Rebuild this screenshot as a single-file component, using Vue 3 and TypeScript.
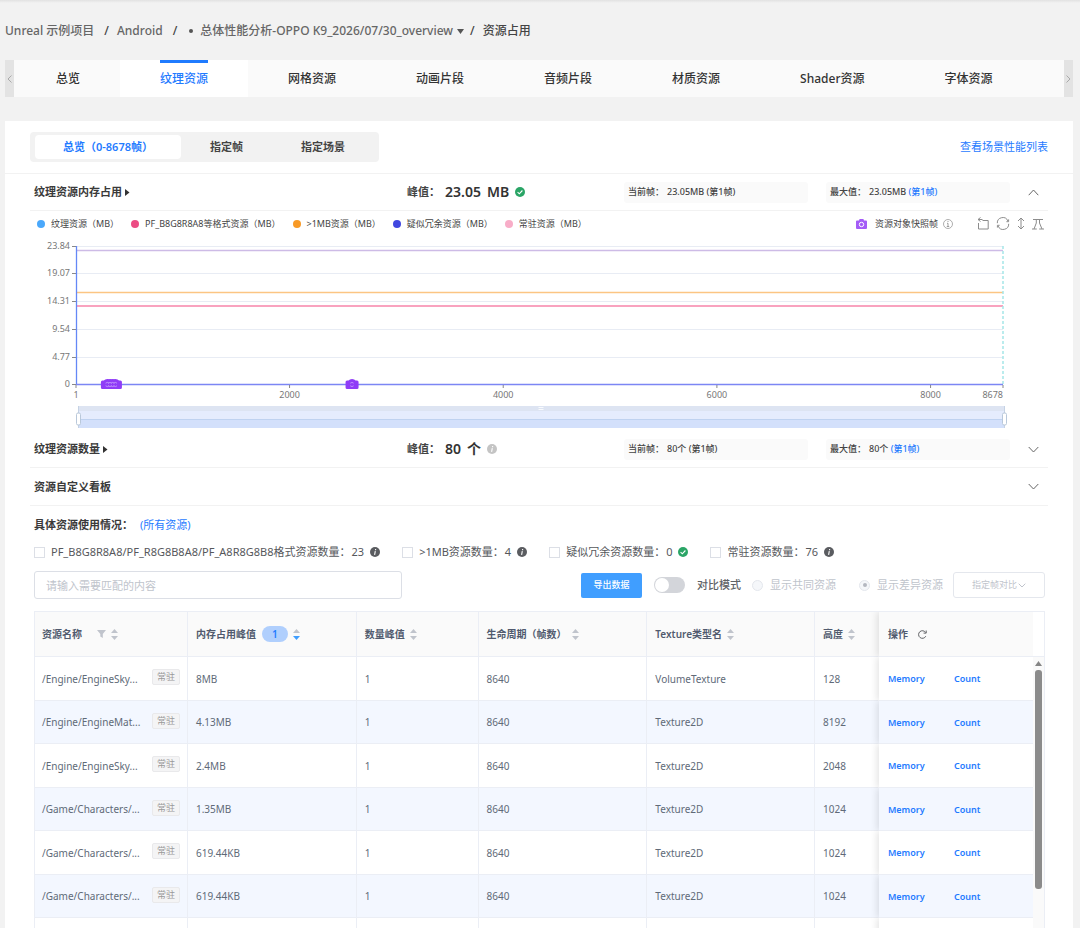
<script setup lang="ts">
import { ref } from 'vue'

interface Tab { id: string; label: string }
interface Stat { label: string; value: string; frame: string }
interface Row { path: string; memory: string; count: string; life: string; type: string; height: string }

const tabs: Tab[] = [
  { id: 'overview', label: '总览' },
  { id: 'texture', label: '纹理资源' },
  { id: 'mesh', label: '网格资源' },
  { id: 'anim', label: '动画片段' },
  { id: 'audio', label: '音频片段' },
  { id: 'material', label: '材质资源' },
  { id: 'shader', label: 'Shader资源' },
  { id: 'font', label: '字体资源' },
]
const activeTab = ref('texture')

const scopes = ['总览（0-8678帧）', '指定帧', '指定场景']
const activeScope = ref(0)

const memoryStats: Stat[] = [
  { label: '当前帧：', value: '23.05MB', frame: '(第1帧)' },
  { label: '最大值：', value: '23.05MB', frame: '(第1帧)' },
]
const countStats: Stat[] = [
  { label: '当前帧：', value: '80个', frame: '(第1帧)' },
  { label: '最大值：', value: '80个', frame: '(第1帧)' },
]

const legend = [
  { name: '纹理资源（MB）', color: '#4aa8fb' },
  { name: 'PF_B8G8R8A8等格式资源（MB）', color: '#ec4c84' },
  { name: '>1MB资源（MB）', color: '#f89a26' },
  { name: '疑似冗余资源（MB）', color: '#4147e0' },
  { name: '常驻资源（MB）', color: '#f8adc8' },
]

const yTicks = [
  { label: '23.84', y: 10 },
  { label: '19.07', y: 37 },
  { label: '14.31', y: 65 },
  { label: '9.54', y: 93 },
  { label: '4.77', y: 121 },
  { label: '0', y: 148 },
]
const maxFrame = 8678
const at = (frame: number): string => `${((frame - 1) / (maxFrame - 1)) * 100}%`
const xTicks = [1, 2000, 4000, 6000, 8000, 8678]
const snapshots = [295, 320, 345, 370, 2585]

const filters = [
  { id: 'fmt', label: 'PF_B8G8R8A8/PF_R8G8B8A8/PF_A8R8G8B8格式资源数量：', count: 23, ok: false },
  { id: 'big', label: '>1MB资源数量：', count: 4, ok: false },
  { id: 'dup', label: '疑似冗余资源数量：', count: 0, ok: true },
  { id: 'res', label: '常驻资源数量：', count: 76, ok: false },
]

const rows: Row[] = [
  { path: '/Engine/EngineSky...', memory: '8MB', count: '1', life: '8640', type: 'VolumeTexture', height: '128' },
  { path: '/Engine/EngineMat...', memory: '4.13MB', count: '1', life: '8640', type: 'Texture2D', height: '8192' },
  { path: '/Engine/EngineSky...', memory: '2.4MB', count: '1', life: '8640', type: 'Texture2D', height: '2048' },
  { path: '/Game/Characters/...', memory: '1.35MB', count: '1', life: '8640', type: 'Texture2D', height: '1024' },
  { path: '/Game/Characters/...', memory: '619.44KB', count: '1', life: '8640', type: 'Texture2D', height: '1024' },
  { path: '/Game/Characters/...', memory: '619.44KB', count: '1', life: '8640', type: 'Texture2D', height: '1024' },
]
</script>

<template>
  <div class="page">
    <nav class="crumbs">
      <a href="#">Unreal 示例项目</a>
      <span class="sep">/</span>
      <a href="#">Android</a>
      <span class="sep">/</span>
      <span class="dot"></span>
      <a href="#">总体性能分析-OPPO K9_2026/07/30_overview</a>
      <svg class="caret" width="7" height="5" viewBox="0 0 7 5"><path d="M0 0h7L3.500 5z" fill="#555" /></svg>
      <span class="sep last">/</span>
      <span class="current">资源占用</span>
    </nav>

    <div class="tabbar">
      <button class="scroll" aria-label="previous"><svg width="5" height="8" viewBox="0 0 5 8"><path d="M4.500.5 1 4l3.500 3.500" fill="none" stroke="#aaa" /></svg></button>
      <div class="tabs" role="tablist">
        <button v-for="t in tabs" :key="t.id" class="tab" role="tab" :class="{ active: t.id === activeTab }" @click="activeTab = t.id">
          <span>{{ t.label }}</span>
        </button>
      </div>
      <button class="scroll" aria-label="next"><svg width="5" height="8" viewBox="0 0 5 8"><path d="M.5.5 4 4 .5 7.500" fill="none" stroke="#aaa" /></svg></button>
    </div>

    <main class="panel">
      <div class="top">
        <div class="segment">
          <button v-for="(s, i) in scopes" :key="s" :class="{ active: i === activeScope }" @click="activeScope = i">{{ s }}</button>
        </div>
        <a class="link" href="#">查看场景性能列表</a>
      </div>

      <section class="inner">
        <header class="metric">
          <h2>纹理资源内存占用 <svg width="5" height="7" viewBox="0 0 5 7"><path d="M0 0v7l4.500-3.500z" fill="#333" /></svg></h2>
          <div class="peak">
            <span class="cap">峰值：</span><b>23.05</b><b>MB</b>
            <svg width="10" height="10" viewBox="0 0 10 10"><circle cx="5" cy="5" r="5" fill="#2aa566" /><path d="m2.600 5.200 1.700 1.600 3.100-3.300" fill="none" stroke="#fff" stroke-width="1.100" /></svg>
          </div>
          <div v-for="(s, i) in memoryStats" :key="s.label" class="stat">
            <span>{{ s.label }}</span><span class="val">{{ s.value }}&nbsp;<a v-if="i" href="#">{{ s.frame }}</a><template v-else>{{ s.frame }}</template></span>
          </div>
          <button class="fold" aria-label="collapse"><svg width="11" height="7" viewBox="0 0 11 7"><path d="M.7 6.200 5.500 1l4.800 5.200" fill="none" stroke="#666" /></svg></button>
        </header>

        <div class="legend">
          <span v-for="l in legend" :key="l.name" class="item"><i :style="{ background: l.color }"></i>{{ l.name }}</span>
          <div class="tools">
            <svg class="cam" width="11" height="10" viewBox="0 0 11 10"><path d="M1 1.500h2L3.600 0h3.800L8 1.500h2a1 1 0 0 1 1 1V9a1 1 0 0 1-1 1H1a1 1 0 0 1-1-1V2.500a1 1 0 0 1 1-1z" fill="#a45cf7" /><circle cx="5.500" cy="5.500" r="2.200" fill="none" stroke="#fff" /></svg>
            <span class="snap">资源对象快照帧</span>
            <svg width="10" height="10" viewBox="0 0 10 10"><circle cx="5" cy="5" r="4.500" fill="none" stroke="#999" stroke-width=".8" /><path d="M5 2v1M4 4.300h1V7.500M3.800 7.500h2.400" fill="none" stroke="#888" stroke-width=".8" /></svg>
            <div class="icons">
              <button aria-label="zoom"><svg width="12" height="13" viewBox="0 0 12 13"><path d="M3.500.5l-2.500 2 2.500 2M1 2.500h4.500M5.500 3.500h5.700V12H1.500V6" fill="none" stroke="#8c8c8c" /></svg></button>
              <button aria-label="restore"><svg width="14" height="13" viewBox="0 0 14 13"><path d="M1.300 6.200A5.500 5.500 0 0 1 11.900 4M12.600 2.400v2.300h-2.200M12.700 6.800A5.500 5.500 0 0 1 2.100 9M1.400 10.600V8.300h2.200" fill="none" stroke="#8c8c8c" /></svg></button>
              <button aria-label="stretch"><svg width="8" height="13" viewBox="0 0 8 13"><path d="M4 1v11M1 4l3-3 3 3M1 9l3 3 3-3" fill="none" stroke="#8c8c8c" /></svg></button>
              <button aria-label="range"><svg width="12" height="12" viewBox="0 0 12 12"><path d="M1 1.500h10M0 11h4.800M7.200 11H12M4.300 1.500V5L2 11M7.500 1.500V5l2.500 6" fill="none" stroke="#8c8c8c" /></svg></button>
            </div>
          </div>
        </div>

        <div class="chart">
          <svg class="plot" width="100%" height="170">
            <g v-for="t in yTicks" :key="t.label">
              <line x1="0" x2="100%" :y1="t.y + 0.5" :y2="t.y + 0.5" stroke="#e8ecf4" />
              <line x1="-4" x2="0" :y1="t.y + 0.5" :y2="t.y + 0.5" stroke="#888" />
              <text x="-6" :y="t.y + 3" text-anchor="end">{{ t.label }}</text>
            </g>
            <line x1="0" x2="100%" y1="14.500" y2="14.500" stroke="#cdbbe6" stroke-width="1.500" />
            <line x1="0" x2="100%" y1="56.500" y2="56.500" stroke="#fcc583" stroke-width="1.500" />
            <line x1="0" x2="100%" y1="70" y2="70" stroke="#f9a3bf" stroke-width="1.800" />
            <line x1="100%" x2="100%" y1="10" y2="148" stroke="#a5e6e8" stroke-width="1.500" stroke-dasharray="3 2" />
            <line x1=".5" x2=".5" y1="10" y2="148" stroke="#6488f6" stroke-width="1.300" />
            <line x1="0" x2="100%" y1="148.500" y2="148.500" stroke="#7c86f4" stroke-width="1.400" />
            <g v-for="(f, i) in xTicks" :key="f">
              <line :x1="at(f)" :x2="at(f)" y1="149" y2="152" stroke="#888" />
              <text :x="at(f)" y="162" :text-anchor="i === xTicks.length - 1 ? 'end' : 'middle'">{{ f }}</text>
            </g>
            <svg v-for="f in snapshots" :key="f" :x="at(f)" y="143" width="13" height="11" class="mark">
              <path d="M-5 1.500h1.500Q-2.500 0 0 0t3.500 1.500H5q1.500 0 1.500 1.500v5.500Q6.500 10 5 10H-5q-1.500 0-1.500-1.500V3q0-1.500 1.500-1.500z" fill="#8f3cf7" />
            </svg>
            <svg v-for="f in snapshots" :key="'lens' + f" :x="at(f)" y="143" width="13" height="11" class="mark">
              <path d="M-1.800 4.200q1.800-1.600 3.400 0M1.600 6.800q-1.600 1.600-3.400 0" fill="none" stroke="#c9a2fb" stroke-width=".8" />
            </svg>
          </svg>
          <svg class="zoom" width="100%" height="22">
            <rect width="100%" height="22" fill="#d3e0fb" />
            <rect width="100%" height="13" fill="#e5ecfd" />
            <rect width="100%" height="5" fill="#dde4f2" />
            <line x1="0" x2="100%" y1="13.500" y2="13.500" stroke="#bfd2f0" />
            <svg x="50%" overflow="visible"><path d="M-3 1.500h5M-3 3.500h5" stroke="#fff" stroke-width=".8" /></svg>
            <svg overflow="visible"><path d="M.5 0v22" stroke="#c5d2e4" /><rect x="-1.500" y="7" width="4" height="12" rx="1.500" fill="#fff" stroke="#b9c8da" /></svg>
            <svg x="100%" overflow="visible"><path d="M-.5 0v22" stroke="#c5d2e4" /><rect x="-2.500" y="7" width="4" height="12" rx="1.500" fill="#fff" stroke="#b9c8da" /></svg>
          </svg>
        </div>

        <header class="metric count">
          <h2>纹理资源数量 <svg width="5" height="7" viewBox="0 0 5 7"><path d="M0 0v7l4.500-3.500z" fill="#333" /></svg></h2>
          <div class="peak">
            <span class="cap">峰值：</span><b>80</b><b>个</b>
            <svg width="10" height="10" viewBox="0 0 10 10"><circle cx="5" cy="5" r="5" fill="#c4c4c4" /><path d="M5.600 2v1.200M5.300 4.200 4.600 7.800" stroke="#fff" stroke-width="1.100" /></svg>
          </div>
          <div v-for="(s, i) in countStats" :key="s.label" class="stat">
            <span>{{ s.label }}</span><span class="val">{{ s.value }}&nbsp;<a v-if="i" href="#">{{ s.frame }}</a><template v-else>{{ s.frame }}</template></span>
          </div>
          <button class="fold" aria-label="expand"><svg width="11" height="7" viewBox="0 0 11 7"><path d="M.7 1 5.500 6l4.800-5" fill="none" stroke="#666" /></svg></button>
        </header>

        <header class="metric board">
          <h2>资源自定义看板</h2>
          <button class="fold" aria-label="expand"><svg width="11" height="7" viewBox="0 0 11 7"><path d="M.7 1 5.500 6l4.800-5" fill="none" stroke="#666" /></svg></button>
        </header>
      </section>

      <section class="detail">
        <div class="usage"><h2>具体资源使用情况：</h2><a class="link" href="#">(所有资源)</a></div>

        <div class="filters">
          <label v-for="f in filters" :key="f.id">
            <input type="checkbox" :name="f.id" />
            <span>{{ f.label }}</span><span class="num">{{ f.count }}</span>
            <svg v-if="f.ok" width="10" height="10" viewBox="0 0 10 10"><circle cx="5" cy="5" r="5" fill="#2aa566" /><path d="m2.600 5.200 1.700 1.600 3.100-3.300" fill="none" stroke="#fff" stroke-width="1.100" /></svg>
            <svg v-else width="10" height="10" viewBox="0 0 10 10"><circle cx="5" cy="5" r="5" fill="#5a5c60" /><path d="M5.600 2v1.200M5.300 4.200 4.600 7.800" stroke="#fff" stroke-width="1.100" /></svg>
          </label>
        </div>

        <div class="actions">
          <input class="search" type="text" aria-label="搜索" placeholder="请输入需要匹配的内容" />
          <div class="right">
            <button class="export">导出数据</button>
            <label class="mode"><input type="checkbox" role="switch" />对比模式</label>
            <label class="opt"><input type="radio" name="cmp" disabled />显示共同资源</label>
            <label class="opt second"><input type="radio" name="cmp" checked disabled />显示差异资源</label>
            <div class="pick">
              <select disabled aria-label="指定帧对比"><option>指定帧对比</option></select>
              <svg width="8" height="5" viewBox="0 0 8 5"><path d="m.7.7 3.300 3.300L7.300.7" fill="none" stroke="#c0c4cc" /></svg>
            </div>
          </div>
        </div>

        <div class="grid">
          <table>
            <colgroup><col class="c1" /><col class="c2" /><col class="c3" /><col class="c4" /><col class="c5" /><col class="c6" /><col class="c7" /></colgroup>
            <thead>
              <tr>
                <th><div>资源名称<svg class="funnel" width="9" height="8" viewBox="0 0 9 8"><path d="M0 0h9L5.800 4v4L3.300 6.500V4z" fill="#c0c4cc" /></svg><svg class="sort" width="7" height="11" viewBox="0 0 7 11"><path d="M0 4h7L3.500 0zM0 7h7l-3.500 4z" /></svg></div></th>
                <th><div>内存占用峰值<span class="badge">1</span><svg class="sort" width="7" height="11" viewBox="0 0 7 11"><path d="M0 4h7L3.500 0z" /><path class="on" d="M0 7h7l-3.500 4z" /></svg></div></th>
                <th><div>数量峰值<svg class="sort" width="7" height="11" viewBox="0 0 7 11"><path d="M0 4h7L3.500 0zM0 7h7l-3.500 4z" /></svg></div></th>
                <th><div>生命周期（帧数）<svg class="sort" width="7" height="11" viewBox="0 0 7 11"><path d="M0 4h7L3.500 0zM0 7h7l-3.500 4z" /></svg></div></th>
                <th><div>Texture类型名<svg class="sort" width="7" height="11" viewBox="0 0 7 11"><path d="M0 4h7L3.500 0zM0 7h7l-3.500 4z" /></svg></div></th>
                <th><div>高度<svg class="sort" width="7" height="11" viewBox="0 0 7 11"><path d="M0 4h7L3.500 0zM0 7h7l-3.500 4z" /></svg></div></th>
                <th class="fixed"><div>操作<svg class="reload" width="9" height="9" viewBox="0 0 9 9"><path d="M7.800 6.200A3.800 3.800 0 1 1 7.600 2.500M8.200.5v2.600H5.600" fill="none" stroke="#606266" /></svg></div></th>
              </tr>
            </thead>
            <tbody>
              <tr v-for="(r, i) in rows" :key="i">
                <td><div class="path"><span>{{ r.path }}</span><em>常驻</em></div></td>
                <td>{{ r.memory }}</td>
                <td>{{ r.count }}</td>
                <td>{{ r.life }}</td>
                <td>{{ r.type }}</td>
                <td>{{ r.height }}</td>
                <td class="fixed"><a href="#">Memory</a><a href="#">Count</a></td>
              </tr>
              <tr aria-hidden="true"><td v-for="n in 6" :key="n"></td><td class="fixed"></td></tr>
            </tbody>
          </table>
          <div class="rail">
            <div class="corner"></div>
            <div class="track">
              <svg width="7" height="5" viewBox="0 0 7 5"><path d="M0 5h7L3.500 0z" fill="#858585" /></svg>
              <div class="thumb"></div>
            </div>
          </div>
        </div>
      </section>
    </main>
  </div>
</template>

<style>
html, body { margin: 0; background: #f2f2f2; }
</style>

<style scoped>
* { box-sizing: border-box; }
.page {
  height: 100vh; overflow: hidden; display: flex; flex-direction: column; padding: 0 7px 0 5px;
  background: #f2f2f2 linear-gradient(#e2e2e2, #f2f2f2) no-repeat 0 0 / 100% 3px;
  font-family: "Noto Sans", "Noto Sans CJK SC", sans-serif; font-size: 11px; line-height: 16px; color: #333;
}
button, input, select { font: inherit; color: inherit; margin: 0; }
button { border: 0; background: none; padding: 0; cursor: pointer; }
a { text-decoration: none; color: #1f7bff; }
svg { display: block; flex: none; }
h2 { margin: 0; font-size: 11px; font-weight: 500; display: flex; align-items: center; gap: 3px; }

.crumbs { flex: none; display: flex; align-items: center; height: 60px; padding-top: 2px; font-size: 12px; font-weight: 500; color: #444; white-space: nowrap; }
.crumbs a { color: #666; }
.sep { margin: 0 8px 0 10px; }
.sep.last { margin: 0 8px 0 6px; }
.dot { width: 4px; height: 4px; border-radius: 50%; background: #555; margin: 0 7px 0 4px; }
.caret { margin-left: 4px; }

.tabbar { flex: none; display: flex; height: 37px; margin-bottom: 24px; background: #fafafa; }
.scroll { width: 9px; background: #e3e3e3; display: flex; align-items: center; justify-content: center; }
.tabs { flex: 1; display: flex; overflow: hidden; }
.tab { padding: 0 40px; font-size: 12px; font-weight: 500; white-space: nowrap; }
.tab:first-child { padding: 0 40px 0 42px; }
.tab span { display: flex; align-items: center; height: 37px; border-top: 3px solid transparent; padding-bottom: 3px; }
.tab.active { background: #fff; color: #1f7bff; }
.tab.active span { border-top-color: #1f7bff; }

.panel { flex: 1; min-height: 0; background: #fff; display: flex; flex-direction: column; }
.top { flex: none; display: flex; align-items: center; justify-content: space-between; height: 53px; padding: 0 25px; border-bottom: 1px solid #f2f2f2; }
.link { font-weight: 400; }
.segment { display: flex; background: #f2f2f2; border-radius: 4px; padding: 3px 5px; height: 30px; }
.segment button { padding: 0 29px; border-radius: 4px; font-weight: 600; font-size: 11px; color: #444; }
.segment button.active { padding: 0 28px; background: #fff; color: #1f7bff; }

.inner { flex: none; margin: 0 25px; }
.metric { display: grid; grid-template-columns: 355px 199px minmax(0, 1fr) minmax(0, 1fr) 11px; column-gap: 18px; align-items: center; height: 37px; padding: 0 9px 0 4px; border-bottom: 1px solid #f2f2f2; }
.metric h2, .usage h2 { font-weight: 600; color: #3a3a3a; }
.metric.board { display: flex; justify-content: space-between; height: 38px; }
.metric.count { height: 37px; margin-top: 3px; }
.peak { display: flex; align-items: center; }
.cap { font-weight: 600; width: 38px; color: #444; }
.peak b { font-size: 14px; font-weight: 600; margin-right: 6px; line-height: 20px; }
.stat { display: flex; height: 21px; align-items: center; padding: 0 4px; background: #fafafa; border-radius: 3px; font-size: 9px; font-weight: 500; color: #444; white-space: nowrap; }
.stat .val { margin-left: 3px; }
.fold { display: flex; align-items: center; justify-content: center; height: 20px; }

.legend { display: flex; align-items: center; height: 25px; padding: 0 4px 0 3px; font-size: 9px; color: #444; white-space: nowrap; }
.item { display: flex; align-items: center; margin-right: 8px; }
.item i { width: 8px; height: 8px; border-radius: 50%; margin: 0 6px 0 4px; }
.tools { margin-left: auto; display: flex; align-items: center; }
.snap { margin: 0 5px 0 8px; }
.icons { display: flex; align-items: center; gap: 7px; margin-left: 24px; }

.chart { padding: 0 45px 0 46px; }
.plot { overflow: visible; }
.plot text { font-size: 9px; fill: #777; }
.mark { overflow: visible; }
.zoom { overflow: visible; margin-left: 2px; }

.detail { flex: 1; min-height: 0; display: flex; flex-direction: column; padding: 0 28px 0 29px; }
.usage { flex: none; display: flex; align-items: center; height: 37px; gap: 7px; }
.filters { flex: none; display: flex; align-items: center; gap: 22px; height: 18px; color: #56585c; white-space: nowrap; }
.filters label { display: flex; align-items: center; }
.filters input { appearance: none; width: 11px; height: 11px; border: 1px solid #dcdfe6; background: #fff; margin-right: 6px; }
.filters .num { margin: 0 6px 0 1px; }

.actions { flex: none; display: flex; align-items: center; justify-content: space-between; margin: 10px 0 12px; height: 28px; color: #606266; }
.search { width: 368px; height: 28px; border: 1px solid #dcdfe6; border-radius: 3px; padding: 0 11px; outline: 0; }
.search::placeholder { color: #c0c4cc; }
.right { display: flex; align-items: center; white-space: nowrap; }
.export { width: 61px; height: 25px; background: #409eff; color: #fff; font-size: 9px; font-weight: 500; border-radius: 2px; }
.mode { display: flex; align-items: center; margin-left: 12px; font-weight: 500; }
.mode input { appearance: none; width: 31px; height: 16px; border-radius: 8px; background: #d3d5da; padding: 1px; margin-right: 12px; }
.mode input::before { content: ""; display: block; width: 14px; height: 14px; border-radius: 50%; background: #fff; }
.mode input:checked { background: #409eff; padding-left: 16px; }
.opt { display: flex; align-items: center; color: #c0c4cc; margin-left: 11px; }
.opt.second { margin-left: 23px; }
.opt input { appearance: none; width: 11px; height: 11px; border: 1px solid #e4e7ed; border-radius: 50%; background: #f5f7fa; margin-right: 7px; display: grid; place-items: center; }
.opt input:checked::before { content: ""; width: 4px; height: 4px; border-radius: 50%; background: #b4b8c0; }
.pick { display: flex; align-items: center; justify-content: center; width: 92px; height: 26px; margin-left: 10px; border: 1px solid #e4e7ed; border-radius: 3px; }
.pick select { appearance: none; border: 0; background: none; padding: 0; font-size: 9px; color: #c0c4cc; opacity: 1; outline: 0; }

.grid { flex: 1; min-height: 0; display: flex; align-items: flex-start; overflow: hidden; border: 1px solid #ebeef5; border-bottom: 0; }
table { flex: 1; min-width: 0; table-layout: fixed; border-collapse: separate; border-spacing: 0; font-size: 10px; color: #606a78; }
.c1 { width: 153px; } .c2 { width: 169px; } .c3 { width: 122px; } .c4 { width: 169px; } .c5 { width: 168px; } .c6 { width: 64px; } .c7 { width: 154px; }
th, td { padding: 0 7px 0 8px; text-align: left; border-right: 1px solid #ebeef5; border-bottom: 1px solid #ebeef5; white-space: nowrap; }
th:first-child, td:first-child { padding-left: 7px; }
th { height: 45px; background: #fafafa; font-weight: 600; color: #515a6e; }
th div { display: flex; align-items: center; }
td { height: 43px; }
tbody tr:nth-child(odd) td { height: 44px; }
tbody tr:nth-child(even) td { background: #f3f7ff; }
.sort { margin-left: 5px; fill: #c0c4cc; }
.sort .on { fill: #409eff; }
.funnel { margin-left: 15px; }
.badge { width: 26px; height: 16px; border-radius: 8px; background: #b0cffd; color: #1f7bff; text-align: center; margin-left: 6px; }
.reload { margin-left: 10px; }
.path { display: flex; align-items: center; justify-content: space-between; }
.path em { font-style: normal; font-size: 9px; line-height: 14px; color: #999; background: #f4f4f5; border: 1px solid #e9e9eb; border-radius: 2px; padding: 0 4px; margin-bottom: 3px; }
th:nth-child(6), td:nth-child(6) { border-right-color: transparent; }
.fixed { box-shadow: -2px 0 7px rgba(0, 0, 0, .11); clip-path: inset(0 0 0 -12px); padding-left: 9px; border-right: 0; }
td.fixed a { font-size: 9px; font-weight: 600; display: inline-block; width: 66px; }
.rail { width: 11px; align-self: stretch; display: flex; flex-direction: column; }
.corner { height: 45px; border-bottom: 1px solid #ebeef5; flex: none; }
.track { flex: 1; background: #fafafa; display: flex; flex-direction: column; align-items: center; padding-top: 4px; gap: 4px; }
.thumb { width: 7px; height: 219px; border-radius: 3px; background: #8b8b8b; }
</style>
